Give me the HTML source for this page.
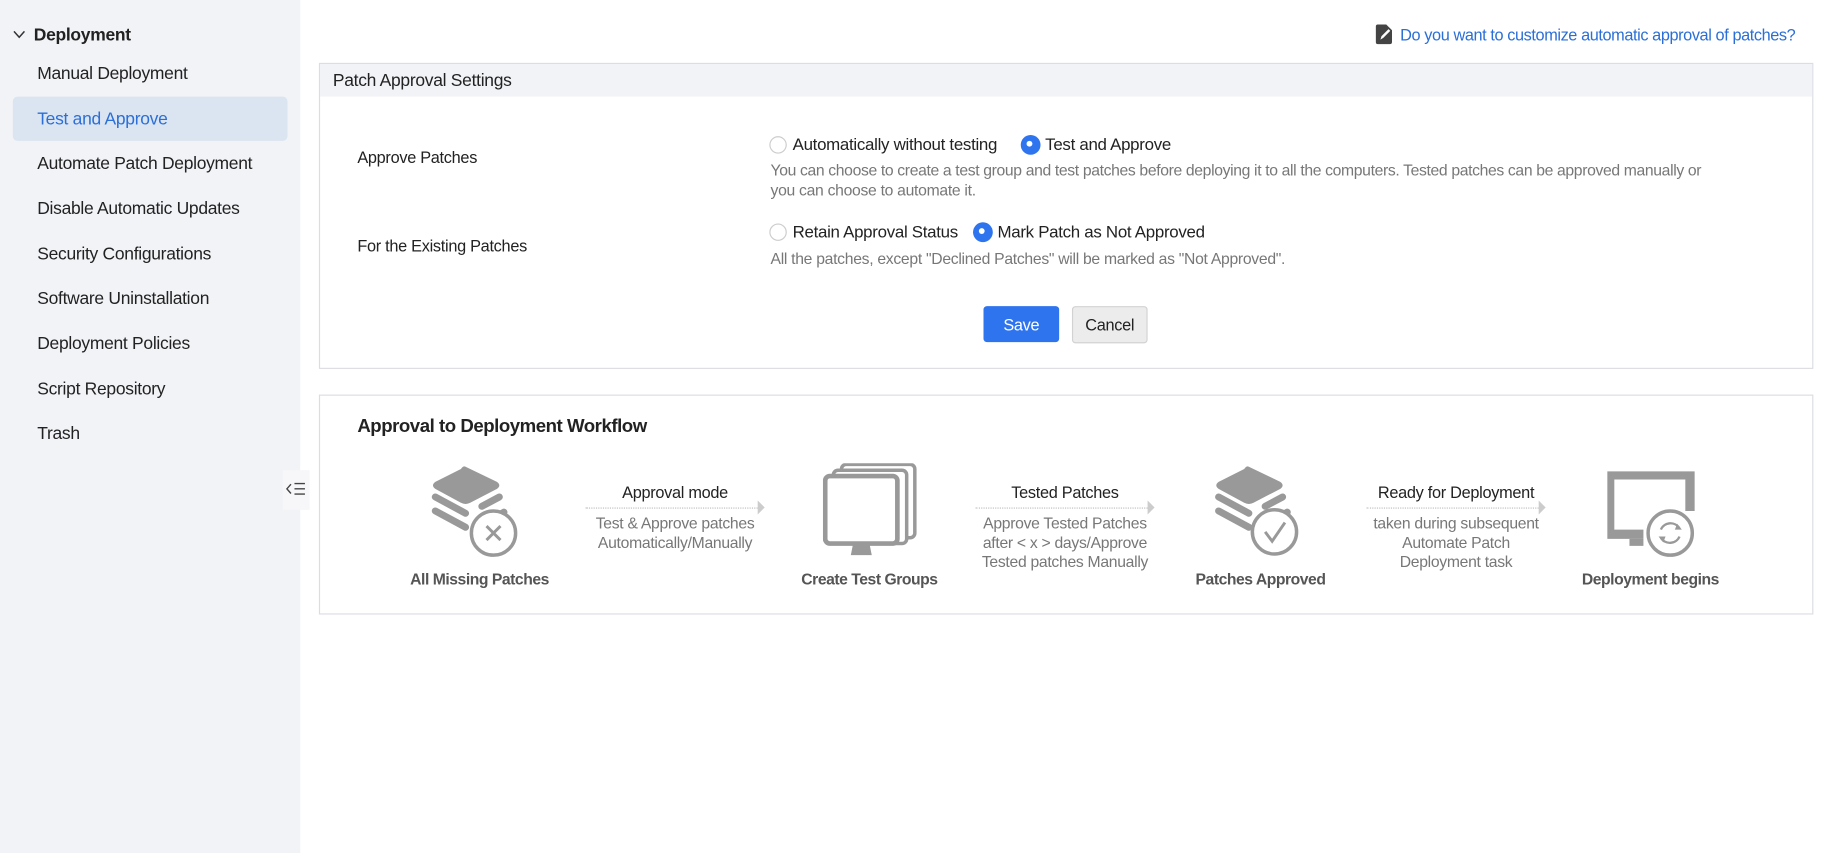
<!DOCTYPE html>
<html><head><meta charset="utf-8"><style>
html,body{margin:0;padding:0;background:#fff;overflow:hidden;width:1825px;height:853px}
#w{position:absolute;left:0;top:0;width:1568px;height:733px;transform:scale(1.16390);transform-origin:0 0;font-family:"Liberation Sans",sans-serif;color:#222;letter-spacing:-0.25px}
.a{position:absolute;white-space:nowrap}
#sb{position:absolute;left:0;top:0;width:258px;height:733px;background:#f2f3f7}
.it{position:absolute;left:32px;font-size:15px;line-height:18px;color:#222}
.g{color:#777;font-size:13.5px}
.rad{position:absolute;width:15px;height:15px;border:1px solid #ccc;border-radius:50%;background:#fff;box-sizing:border-box}
.rad.on{background:#2f74ef;border:none}
.rad.on:after{content:"";position:absolute;left:5px;top:5px;width:5px;height:5px;border-radius:50%;background:#fff}
.lbl{font-size:14.5px;color:#222}
.wl{position:absolute;font-size:13.5px;font-weight:bold;color:#555;text-align:center;width:200px;letter-spacing:-0.4px}
.at{position:absolute;font-size:14px;color:#222;text-align:center;width:200px}
.ad{position:absolute;font-size:13.5px;color:#777;text-align:center;width:200px;line-height:16.5px}
.dl{position:absolute;height:0;border-top:1px dotted #bbb;width:148px}
.ar{position:absolute;width:0;height:0;border-left:6px solid #ccc;border-top:6px solid transparent;border-bottom:6px solid transparent}
</style></head><body><div id="w">
<div id="sb">
<svg class="a" style="left:11px;top:26px" width="11" height="8"><path d="M1 1 L5.5 6 L10 1" stroke="#333" stroke-width="1.3" fill="none"/></svg>
<div class="a" style="left:29px;top:22px;font-size:15px;font-weight:bold">Deployment</div>
<div class="it" style="top:55px">Manual Deployment</div>
<div class="a" style="left:11px;top:83px;width:236px;height:38px;background:#dbe5f1;border-radius:4px"></div>
<div class="it" style="top:94px;color:#2b6fd6">Test and Approve</div>
<div class="it" style="top:132px">Automate Patch Deployment</div>
<div class="it" style="top:171px">Disable Automatic Updates</div>
<div class="it" style="top:210px">Security Configurations</div>
<div class="it" style="top:248px">Software Uninstallation</div>
<div class="it" style="top:287px">Deployment Policies</div>
<div class="it" style="top:326px">Script Repository</div>
<div class="it" style="top:364px">Trash</div>
</div>
<div class="a" style="left:243px;top:404px;width:23px;height:34px;background:#f7f7f9"></div>
<svg class="a" style="left:245px;top:413px" width="18" height="14"><path d="M5 3 L1.5 7 L5 11" stroke="#444" stroke-width="1.2" fill="none"/><path d="M8 2.5H17M8 7H17M8 11.5H17" stroke="#444" stroke-width="1.2"/></svg>

<svg class="a" style="left:1182px;top:21px" width="14" height="17"><path d="M0 2 Q0 0 2 0 H9 L14 5 V15 Q14 17 12 17 H2 Q0 17 0 15Z" fill="#444"/><path d="M4 13 L5 10 L11 4 L12.5 5.5 L6.5 11.5Z" fill="#fff"/></svg>
<div class="a" style="left:1203px;top:22px;font-size:14px;color:#2b6fd6;letter-spacing:-0.35px">Do you want to customize automatic approval of patches?</div>

<div class="a" style="left:274px;top:54px;width:1282px;height:261px;border:1px solid #dcdde2"></div>
<div class="a" style="left:275px;top:55px;width:1282px;height:28px;background:#f2f3f7"></div>
<div class="a" style="left:286px;top:61px;font-size:15px">Patch Approval Settings</div>
<div class="a lbl" style="left:307px;top:127px;font-size:14px">Approve Patches</div>
<div class="a lbl" style="left:307px;top:203px;font-size:14px">For the Existing Patches</div>
<div class="rad" style="left:661px;top:117px"></div>
<div class="a lbl" style="left:681px;top:117px">Automatically without testing</div>
<div class="rad on" style="left:877px;top:116px;width:17px;height:17px"></div>
<div class="a lbl" style="left:898px;top:117px">Test and Approve</div>
<div class="a g" style="left:662px;top:139px;letter-spacing:-0.3px">You can choose to create a test group and test patches before deploying it to all the computers. Tested patches can be approved manually or</div>
<div class="a g" style="left:662px;top:156px">you can choose to automate it.</div>
<div class="rad" style="left:661px;top:192px"></div>
<div class="a lbl" style="left:681px;top:192px">Retain Approval Status</div>
<div class="rad on" style="left:836px;top:191px;width:17px;height:17px"></div>
<div class="a lbl" style="left:857px;top:192px">Mark Patch as Not Approved</div>
<div class="a g" style="left:662px;top:215px">All the patches, except "Declined Patches" will be marked as "Not Approved".</div>
<div class="a" style="left:845px;top:263px;width:65px;height:31px;background:#2f74ef;border-radius:3px;color:#fff;font-size:14px;text-align:center;line-height:32px">Save</div>
<div class="a" style="left:921px;top:263px;width:63px;height:30px;background:#ececec;border:1px solid #d2d2d2;border-radius:3px;color:#222;font-size:14px;text-align:center;line-height:31px">Cancel</div>

<div class="a" style="left:274px;top:339px;width:1282px;height:187px;border:1px solid #dcdde2"></div>
<div class="a" style="left:307px;top:358px;font-size:16px;font-weight:bold;letter-spacing:-0.4px">Approval to Deployment Workflow</div>

<!-- icon 1 -->
<svg class="a" style="left:370px;top:400px" width="90" height="80">
<path d="M30 1 L57 14 Q61 17 57 20 L34 32 Q30 34 26 32 L4 20 Q0 17 4 14 L26 3 Q28 0 30 1Z" fill="#999"/>
<path d="M4 27 L30 41 M59 27 L44 35" stroke="#999" stroke-width="6" stroke-linecap="round" fill="none"/>
<path d="M4 39 L30 53 M63 40 L58 43" stroke="#999" stroke-width="6" stroke-linecap="round" fill="none"/>
<circle cx="54" cy="58" r="19" fill="#fff" stroke="#999" stroke-width="3"/>
<path d="M48 52 L60 64 M60 52 L48 64" stroke="#999" stroke-width="2.5"/>
</svg>
<!-- icon 2 -->
<svg class="a" style="left:707px;top:398px" width="85" height="80">
<rect x="16" y="1" width="63" height="63" rx="4" fill="#fff" stroke="#999" stroke-width="3"/>
<rect x="9" y="6" width="63" height="63" rx="4" fill="#fff" stroke="#999" stroke-width="3"/>
<rect x="2" y="11" width="62" height="58" rx="4" fill="#fff" stroke="#999" stroke-width="4"/>
<path d="M26 69 H40 L42 79 H24Z" fill="#999"/>
</svg>
<!-- icon 3 -->
<svg class="a" style="left:1042px;top:400px" width="90" height="80">
<path d="M31 1 L58 14 Q62 17 58 20 L35 32 Q31 34 27 32 L5 20 Q1 17 5 14 L27 3 Q29 0 31 1Z" fill="#999"/>
<path d="M5 27 L31 41 M60 27 L45 35" stroke="#999" stroke-width="6" stroke-linecap="round" fill="none"/>
<path d="M5 39 L31 53 M64 40 L59 43" stroke="#999" stroke-width="6" stroke-linecap="round" fill="none"/>
<circle cx="53" cy="57" r="19" fill="#fff" stroke="#999" stroke-width="3"/>
<path d="M45 57 L51 65 L62 49" stroke="#999" stroke-width="2.5" fill="none"/>
</svg>
<!-- icon 4 -->
<svg class="a" style="left:1378px;top:403px" width="85" height="80">
<path d="M3 2 H78 V36 H70 V9 H9 V52 H34 V60 H3Z" fill="#999"/>
<path d="M22 60 H34 V66 H22Z" fill="#999"/>
<circle cx="57" cy="55" r="19" fill="#fff" stroke="#999" stroke-width="3"/>
<path d="M49 52 A9 9 0 0 1 65 51 M65 58 A9 9 0 0 1 49 59" stroke="#999" stroke-width="2" fill="none"/>
<path d="M63 47 L67 52 L61 52Z M51 63 L47 58 L53 58Z" fill="#999"/>
</svg>

<div class="wl" style="left:312px;top:490px">All Missing Patches</div>
<div class="wl" style="left:647px;top:490px">Create Test Groups</div>
<div class="wl" style="left:983px;top:490px">Patches Approved</div>
<div class="wl" style="left:1318px;top:490px">Deployment begins</div>

<div class="at" style="left:480px;top:415px">Approval mode</div>
<div class="dl" style="left:503px;top:436px"></div><div class="ar" style="left:651px;top:430px"></div>
<div class="ad" style="left:480px;top:442px">Test &amp; Approve patches<br>Automatically/Manually</div>

<div class="at" style="left:815px;top:415px">Tested Patches</div>
<div class="dl" style="left:838px;top:436px"></div><div class="ar" style="left:986px;top:430px"></div>
<div class="ad" style="left:815px;top:442px">Approve Tested Patches<br>after &lt; x &gt; days/Approve<br>Tested patches Manually</div>

<div class="at" style="left:1151px;top:415px">Ready for Deployment</div>
<div class="dl" style="left:1174px;top:436px"></div><div class="ar" style="left:1322px;top:430px"></div>
<div class="ad" style="left:1151px;top:442px">taken during subsequent<br>Automate Patch<br>Deployment task</div>
</div></body></html>
